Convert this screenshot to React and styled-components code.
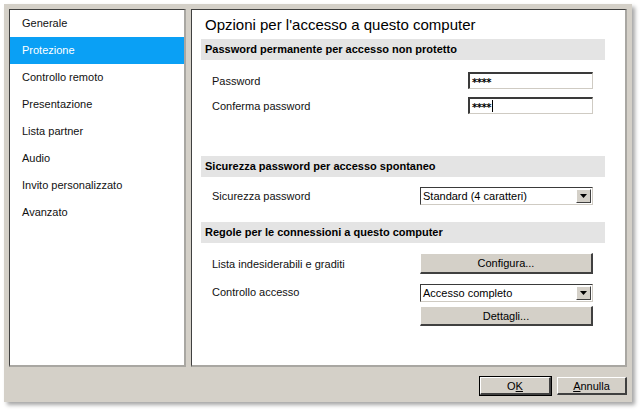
import React from 'react';
import styled, { createGlobalStyle } from 'styled-components';

const GlobalStyle = createGlobalStyle`
  html, body {
    margin: 0;
    padding: 0;
    background: #ffffff;
  }
  body {
    font-family: "Liberation Sans", Arial, sans-serif;
    font-size: 11px;
    color: #000;
  }
`;

const menuItems = [
  'Generale',
  'Protezione',
  'Controllo remoto',
  'Presentazione',
  'Lista partner',
  'Audio',
  'Invito personalizzato',
  'Avanzato',
];

const Page = styled.div`
  width: 640px;
  height: 411px;
  padding: 4px 0 0 4px;
  box-sizing: border-box;
`;

const Window = styled.div`
  width: 628px;
  height: 398px;
  box-sizing: border-box;
  background: #d4d0c8;
  padding: 5px 5px 0 5px;
  display: flex;
  flex-direction: column;
  box-shadow: 3px 3px 4px rgba(0, 0, 0, 0.35);
`;

const Panels = styled.div`
  display: flex;
  gap: 5px;
  height: 358px;
`;

const Sunken = styled.div`
  background: #fff;
  box-sizing: border-box;
  border-top: 1px solid #404040;
  border-left: 1px solid #404040;
  border-right: 2px solid #a9a7a2;
  border-bottom: 2px solid #a9a7a2;
`;

const Sidebar = styled(Sunken)`
  width: 177px;
  display: flex;
  flex-direction: column;
`;

const MenuItem = styled.div`
  height: 27px;
  line-height: 27px;
  padding-left: 12px;
  color: ${({ $active }) => ($active ? '#ffffff' : '#111')};
  background: ${({ $active }) => ($active ? '#0aa0f5' : 'transparent')};
`;

const Content = styled(Sunken)`
  flex: 1;
  padding: 5px 20px 0 9px;
  display: flex;
  flex-direction: column;
`;

const Title = styled.div`
  font-size: 15px;
  height: 19px;
  line-height: 19px;
  padding-left: 4px;
  margin-bottom: 5px;
`;

const Band = styled.div`
  background: #e4e4e4;
  height: 21px;
  line-height: 21px;
  padding-left: 4px;
  font-weight: bold;
  margin-top: ${({ $top }) => $top || 0}px;
`;

const Row = styled.div`
  display: flex;
  align-items: ${({ $alignTop }) => ($alignTop ? 'flex-start' : 'center')};
  justify-content: space-between;
  padding: 0 12px 0 11px;
  margin-top: ${({ $top }) => $top || 0}px;
`;

const Label = styled.span`
  color: #111;
  margin-top: ${({ $top }) => $top || 0}px;
`;

const TextBox = styled.div`
  width: 125px;
  height: 17px;
  box-sizing: border-box;
  background: #fff;
  border-top: 2px solid #3a3a3a;
  border-left: 2px solid #3a3a3a;
  border-right: 1px solid #cfcbc3;
  border-bottom: 1px solid #cfcbc3;
  display: flex;
  align-items: center;
  padding: 3px 0 0 2px;
  font-family: "DejaVu Sans", sans-serif;
  font-weight: bold;
  font-size: 10px;
  letter-spacing: -0.5px;
`;

const Caret = styled.span`
  display: inline-block;
  width: 1px;
  height: 12px;
  background: #000;
  margin: -3px 0 0 1px;
`;

const Control = styled.div`
  width: 173px;
  display: flex;
  flex-direction: column;
  gap: ${({ $gap }) => $gap || 0}px;
`;

const Select = styled.div`
  height: 18px;
  box-sizing: border-box;
  background: #fff;
  border-top: 1px solid #3a3a3a;
  border-left: 1px solid #3a3a3a;
  border-right: 1px solid #cfcbc3;
  border-bottom: 1px solid #cfcbc3;
  display: flex;
  align-items: center;
  justify-content: space-between;
  padding: 1px 1px 1px 2px;
`;

const ArrowButton = styled.div`
  width: 15px;
  height: 14px;
  box-sizing: border-box;
  background: #d4d0c8;
  border-top: 1px solid #fff;
  border-left: 1px solid #fff;
  border-right: 1px solid #404040;
  border-bottom: 1px solid #404040;
  display: flex;
  align-items: center;
  justify-content: center;
`;

const Button = styled.div`
  height: ${({ $h }) => $h || 21}px;
  width: ${({ $w }) => ($w ? `${$w}px` : 'auto')};
  box-sizing: border-box;
  background: #d4d0c8;
  border-top: 1px solid #ffffff;
  border-left: 1px solid #ffffff;
  border-right: 2px solid #404040;
  border-bottom: 2px solid #404040;
  outline: ${({ $default }) => ($default ? '1px solid #000' : 'none')};
  display: flex;
  align-items: center;
  justify-content: center;
`;

const Footer = styled.div`
  flex: 1;
  display: flex;
  justify-content: flex-end;
  align-items: flex-start;
  padding-top: 10px;
  gap: 6px;
`;

const Key = styled.span`
  text-decoration: underline;
`;

const DropArrow = () => (
  <svg width="7" height="4" viewBox="0 0 7 4">
    <path d="M0 0h7L3.5 4z" fill="#000" />
  </svg>
);

export default function App() {
  return (
    <>
      <GlobalStyle />
      <Page>
        <Window>
          <Panels>
            <Sidebar>
              {menuItems.map((item) => (
                <MenuItem key={item} $active={item === 'Protezione'}>
                  {item}
                </MenuItem>
              ))}
            </Sidebar>
            <Content>
              <Title>Opzioni per l'accesso a questo computer</Title>
              <Band>Password permanente per accesso non protetto</Band>
              <Row $top={12}>
                <Label>Password</Label>
                <TextBox>****</TextBox>
              </Row>
              <Row $top={8}>
                <Label>Conferma password</Label>
                <TextBox>
                  ****
                  <Caret />
                </TextBox>
              </Row>
              <Band $top={42}>Sicurezza password per accesso spontaneo</Band>
              <Row $top={10}>
                <Label>Sicurezza password</Label>
                <Control>
                  <Select>
                    <span>Standard (4 caratteri)</span>
                    <ArrowButton>
                      <DropArrow />
                    </ArrowButton>
                  </Select>
                </Control>
              </Row>
              <Band $top={17}>Regole per le connessioni a questo computer</Band>
              <Row $top={10}>
                <Label>Lista indesiderabili e graditi</Label>
                <Control>
                  <Button>Configura...</Button>
                </Control>
              </Row>
              <Row $top={10} $alignTop>
                <Label $top={2}>Controllo accesso</Label>
                <Control $gap={4}>
                  <Select>
                    <span>Accesso completo</span>
                    <ArrowButton>
                      <DropArrow />
                    </ArrowButton>
                  </Select>
                  <Button $h={20}>Dettagli...</Button>
                </Control>
              </Row>
            </Content>
          </Panels>
          <Footer>
            <Button $w={71} $h={18} $default>
              O<Key>K</Key>
            </Button>
            <Button $w={70} $h={18}>
              <Key>A</Key>nnulla
            </Button>
          </Footer>
        </Window>
      </Page>
    </>
  );
}
